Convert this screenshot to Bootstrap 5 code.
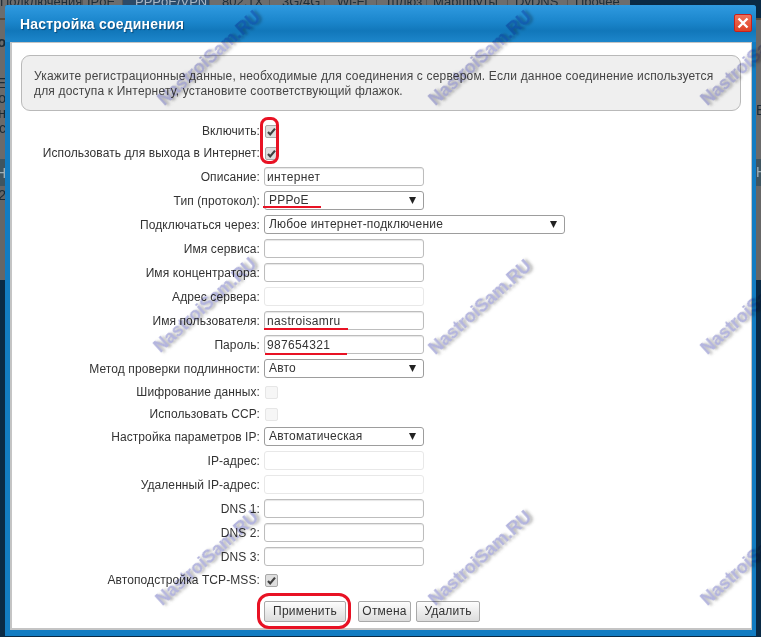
<!DOCTYPE html>
<html lang="ru">
<head>
<meta charset="utf-8">
<title>Настройка соединения</title>
<link href="https://cdn.jsdelivr.net/npm/bootstrap@5.3.0/dist/css/bootstrap.min.css" rel="stylesheet">
<style>
html,body{margin:0;padding:0;background:#0a2a45;}
body{font-family:"Liberation Sans",Arial,sans-serif;font-size:12px;color:#333;line-height:15px;}
.stage{position:relative;width:761px;height:637px;overflow:hidden;background:#0a2a45;}
.tabstrip{height:20px;overflow:hidden;}
.tabset{width:630px;height:20px;background:#6d6d6d;}
.tabcell{font-size:13px;line-height:10px;height:23px;color:#1f2c36;border-right:1px solid #565656;text-align:left;margin-top:-3px;white-space:nowrap;filter:blur(.45px);overflow:hidden;}
.tabcell.t1{width:83px;text-align:right;padding-right:19px}
.tabcell.t2{width:40px;padding-left:4px}
.tabcell.t3{width:87px;padding-left:12px;background:#2c4a68;color:#a9b6c4}
.tabcell.t4{width:60px;padding-left:12px}
.tabcell.t5{width:55px;padding-left:12px}
.tabcell.t6{width:52px;padding-left:12px}
.tabcell.t7{width:50px;padding-left:10px}
.tabcell.t8{width:81px;padding-left:6px}
.tabcell.t9{width:60px;padding-left:7px}
.tabcell.t10{width:62px;padding-left:7px;border-right:0}
.sidestrip{position:absolute;top:18px;width:6px;height:619px;overflow:hidden;
background:linear-gradient(#5b4a3a 0,#5b4a3a 2px,#6a6a6a 2px,#6a6a6a 141px,#3f5560 141px,#3f5560 168px,#666 168px,#666 262px,#0a2a45 262px);}
.sideleft{left:0;}
.sideright{right:0;}
.sideglyph{position:absolute;font-size:14px;line-height:14px;color:#1c2a34;right:0;filter:blur(.3px);}
.g1{top:17px;font-weight:700}.g2{top:58px}.g3{top:73px}.g4{top:88px}.g5{top:103px}.g6{top:148px;color:#9fb0b8}.g7{top:170px}
.sideright .sideglyph{left:1px;right:auto}
.g8{top:85px}.g9{top:147px;color:#9fb0b8}
.dialog{position:absolute;left:5px;top:5px;width:751px;height:631px;border-radius:3px 3px 0 0;background:#127cc2;display:flex;flex-direction:column;}
.dlghead{height:37px;flex:none;background:linear-gradient(#2f9ae0 0,#1b86cc 45%,#1177ba 70%,#1d86cb 100%);border-radius:3px 3px 0 0;padding:0 4px 0 15px;}
.dlgtitle{font-size:14px;letter-spacing:.2px;font-weight:700;color:#fff;text-shadow:1px 1px 1px #0b4a78;line-height:18px;}
.closer{width:18px;height:18px;border:1px solid #c9201c;border-radius:2px;background:linear-gradient(#f0735a,#de4226);margin-top:-1px;}
.dlgbody{flex:1;margin:0 4px 6px 5px;background:#fff;border:solid #c4c4c4;border-width:1px 1px 2px 2px;padding:12px 10px 0 9px;position:relative;}
.infobox{height:56px;background:#efefef;border:1px solid #b9b9b9;border-radius:9px;padding:13px 12px 0;color:#444;line-height:15px;margin-bottom:9px;letter-spacing:.18px;}
.frow{display:flex;align-items:center;height:24px;}
.frow.chk{height:22px;}
.frow.gap1{margin-top:1px;}
.flabel{width:248px;margin-left:-9px;text-align:right;flex:none;margin-right:4px;white-space:nowrap;line-height:15px;padding-top:1px;letter-spacing:.09px;}
.form-control.field,.form-select.field{height:19px;min-height:0;width:160px;margin-top:-1px;border-radius:3px;font-size:12px;line-height:15px;padding:0 2px;color:#333;font-family:"Liberation Sans",Arial,sans-serif;box-shadow:inset 0 1px 1px rgba(0,0,0,.1);border:1px solid #bdbdbd;}
.form-control.field{letter-spacing:.35px;}
.form-control.field:disabled{background:#fff;border-color:#e8e8e8;box-shadow:none;}
.form-select.field{padding:0 0 0 4px;letter-spacing:.2px;border-color:#9d9d9d;box-shadow:none;background-color:#fff;background-image:url("data:image/svg+xml,%3Csvg xmlns='http://www.w3.org/2000/svg' width='7' height='7'%3E%3Cpath d='M0 0h7L3.5 7z' fill='%23222'/%3E%3C/svg%3E");background-position:right 7px center;background-size:7px 7px;}
.form-select.field.wide{width:301px;}
.form-check-input.tick{width:13px;height:13px;margin:0 0 0 1px;border-radius:2px;border:1px solid #a8a8a8;background-color:#dedede;background-size:11px 11px;background-image:url("data:image/svg+xml,%3Csvg xmlns='http://www.w3.org/2000/svg' viewBox='0 0 11 11'%3E%3Cpath d='M2 6l2.2 2.4L9 2.6' fill='none' stroke='%23404040' stroke-width='2.2'/%3E%3C/svg%3E");opacity:1;}
.form-check-input.tick:disabled{background-color:#f6f6f6;background-image:none;border-color:#e6e6e6;opacity:1;}
.btnrow{display:flex;margin-top:10px;margin-left:243px;}
.btn.act{height:21px;padding:0;font-size:12px;line-height:19px;color:#333;border:1px solid #a9a9a9;border-radius:2px;background:linear-gradient(#fdfdfd,#dcdcdc);font-family:"Liberation Sans",Arial,sans-serif;letter-spacing:.2px;}
.b1{width:82px;margin-right:12px}.b2{width:53px;margin-right:5px}.b3{width:64px}
.redbox{position:absolute;border:3px solid #e81224;border-radius:8px;}
.rb1{left:260px;top:117px;width:19px;height:47px;}
.rb2{left:257px;top:593px;width:94px;height:36px;border-radius:12px;}
.redline{position:absolute;height:2px;background:#e81224;}
.rl1{left:263px;top:206px;width:58px}.rl2{left:264px;top:328px;width:84px}.rl3{left:265px;top:353px;width:82px}
.wmark{position:absolute;font-family:"Liberation Sans",Arial,sans-serif;font-weight:700;font-size:18px;line-height:24px;white-space:nowrap;color:#b3b4de;mix-blend-mode:multiply;text-shadow:2px 2px 3px rgba(120,120,120,.6);filter:blur(.3px);transform:translate(-50%,-50%) rotate(-42deg);}
.w1{left:209px;top:58px}.w2{left:480px;top:58px}.w3{left:752px;top:58px}
.w4{left:205px;top:305px}.w5{left:480px;top:307px}.w6{left:752px;top:307px}
.w7{left:207px;top:558px}.w8{left:480px;top:558px}.w9{left:752px;top:558px}
</style>
</head>
<body>
<div class="stage">
  <div class="tabstrip">
    <div class="tabset d-flex">
      <div class="tabcell t1">Подключения</div><div class="tabcell t2">IPoE</div><div class="tabcell t3">PPPoE/VPN</div><div class="tabcell t4">802.1X</div><div class="tabcell t5">3G/4G</div><div class="tabcell t6">Wi-Fi</div><div class="tabcell t7">Шлюз</div><div class="tabcell t8">Маршруты</div><div class="tabcell t9">DyDNS</div><div class="tabcell t10">Прочее</div>
    </div>
  </div>
  <div class="sidestrip sideleft">
    <span class="sideglyph g1">о</span><span class="sideglyph g2">Е</span><span class="sideglyph g3">о</span><span class="sideglyph g4">н</span><span class="sideglyph g5">с</span><span class="sideglyph g6">Н</span><span class="sideglyph g7">2</span>
  </div>
  <div class="sidestrip sideright">
    <span class="sideglyph g8">В</span><span class="sideglyph g9">Н</span>
  </div>

  <div class="dialog">
    <div class="dlghead d-flex align-items-center justify-content-between">
      <div class="dlgtitle">Настройка соединения</div>
      <div class="closer d-flex align-items-center justify-content-center">
        <svg width="12" height="12" viewBox="0 0 12 12"><path d="M1.5 1.5l9 9M10.5 1.5l-9 9" stroke="#fff" stroke-width="2.4" fill="none"/></svg>
      </div>
    </div>
    <div class="dlgbody">
      <div class="infobox">Укажите регистрационные данные, необходимые для соединения с сервером. Если данное соединение используется<br>для доступа к Интернету, установите соответствующий флажок.</div>
      <form>
        <div class="frow chk"><div class="flabel">Включить:</div><input class="form-check-input tick" type="checkbox" checked></div>
        <div class="frow chk"><div class="flabel">Использовать для выхода в Интернет:</div><input class="form-check-input tick" type="checkbox" checked></div>
        <div class="frow gap1"><div class="flabel">Описание:</div><input class="form-control field" type="text" value="интернет"></div>
        <div class="frow"><div class="flabel">Тип (протокол):</div><select class="form-select field"><option>PPPoE</option></select></div>
        <div class="frow"><div class="flabel">Подключаться через:</div><select class="form-select field wide"><option>Любое интернет-подключение</option></select></div>
        <div class="frow"><div class="flabel">Имя сервиса:</div><input class="form-control field" type="text"></div>
        <div class="frow"><div class="flabel">Имя концентратора:</div><input class="form-control field" type="text"></div>
        <div class="frow"><div class="flabel">Адрес сервера:</div><input class="form-control field" type="text" disabled></div>
        <div class="frow"><div class="flabel">Имя пользователя:</div><input class="form-control field" type="text" value="nastroisamru"></div>
        <div class="frow"><div class="flabel">Пароль:</div><input class="form-control field" type="text" value="987654321"></div>
        <div class="frow"><div class="flabel">Метод проверки подлинности:</div><select class="form-select field"><option>Авто</option></select></div>
        <div class="frow chk"><div class="flabel">Шифрование данных:</div><input class="form-check-input tick" type="checkbox" disabled></div>
        <div class="frow chk"><div class="flabel">Использовать ССР:</div><input class="form-check-input tick" type="checkbox" disabled></div>
        <div class="frow"><div class="flabel">Настройка параметров IP:</div><select class="form-select field"><option>Автоматическая</option></select></div>
        <div class="frow"><div class="flabel">IP-адрес:</div><input class="form-control field" type="text" disabled></div>
        <div class="frow"><div class="flabel">Удаленный IP-адрес:</div><input class="form-control field" type="text" disabled></div>
        <div class="frow"><div class="flabel">DNS 1:</div><input class="form-control field" type="text"></div>
        <div class="frow"><div class="flabel">DNS 2:</div><input class="form-control field" type="text"></div>
        <div class="frow"><div class="flabel">DNS 3:</div><input class="form-control field" type="text"></div>
        <div class="frow chk"><div class="flabel">Автоподстройка TCP-MSS:</div><input class="form-check-input tick" type="checkbox" checked></div>
        <div class="btnrow">
          <button type="button" class="btn act b1">Применить</button>
          <button type="button" class="btn act b2">Отмена</button>
          <button type="button" class="btn act b3">Удалить</button>
        </div>
      </form>
    </div>
  </div>

  <div class="redbox rb1"></div>
  <div class="redbox rb2"></div>
  <div class="redline rl1"></div>
  <div class="redline rl2"></div>
  <div class="redline rl3"></div>

  <div class="wmark w1">NastroiSam.RU</div>
  <div class="wmark w2">NastroiSam.RU</div>
  <div class="wmark w3">NastroiSam.RU</div>
  <div class="wmark w4">NastroiSam.RU</div>
  <div class="wmark w5">NastroiSam.RU</div>
  <div class="wmark w6">NastroiSam.RU</div>
  <div class="wmark w7">NastroiSam.RU</div>
  <div class="wmark w8">NastroiSam.RU</div>
  <div class="wmark w9">NastroiSam.RU</div>
</div>
<script src="https://cdn.jsdelivr.net/npm/bootstrap@5.3.0/dist/js/bootstrap.bundle.min.js"></script>
</body>
</html>
